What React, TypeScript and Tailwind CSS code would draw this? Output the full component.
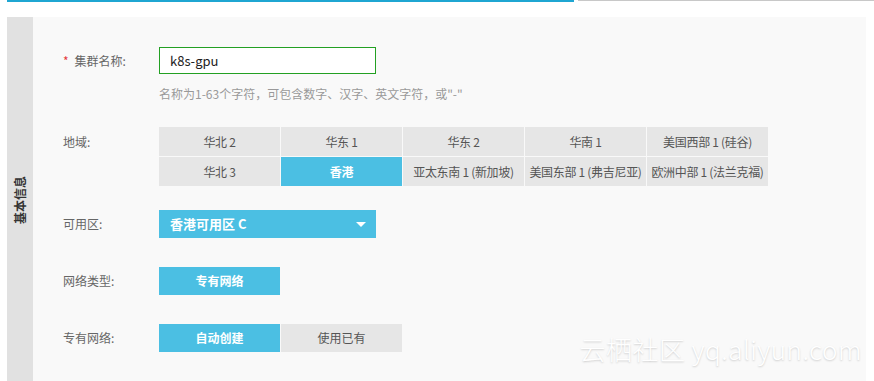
import React from "react";

const regions = [
  ["华北 2", "华东 1", "华东 2", "华南 1", "美国西部 1 (硅谷)"],
  ["华北 3", "香港", "亚太东南 1 (新加坡)", "美国东部 1 (弗吉尼亚)", "欧洲中部 1 (法兰克福)"],
];

const font = { fontFamily: '"Noto Sans CJK SC", "Noto Sans", sans-serif' };

const Label = ({ children, required }: { children: React.ReactNode; required?: boolean }) => (
  <div className="w-[96px] shrink-0 flex items-center text-[12px] text-[#666]">
    {required && <span className="text-[#e4393c] mr-[6px] text-[12px]">*</span>}
    {children}
  </div>
);

const Cell = ({ text, active }: { text: string; active?: boolean }) => (
  <div
    className={`w-[121px] h-[29px] flex items-center justify-center whitespace-nowrap text-[12px] tracking-[-0.3px] ${
      active ? "bg-[#4bbfe3] text-white font-bold" : "bg-[#e6e6e6] text-[#555]"
    }`}
  >
    {text}
  </div>
);

export default function App() {
  return (
    <div className="w-[874px] h-[381px] bg-white overflow-hidden flex flex-col" style={font}>
      <div className="flex h-[2px] shrink-0">
        <div className="w-[7px]" />
        <div className="w-[567px] h-[2px] bg-[#1fa6d2]" />
        <div className="w-[4px]" />
        <div className="flex-1 h-[1px] bg-[#c8c8c8]" />
      </div>
      <div className="h-[15px] shrink-0" />
      <div className="flex flex-1 ml-[7px] w-[859px]">
        <div className="w-[26px] bg-[#e1e1e1] flex items-center justify-center">
          <div className="-rotate-90 whitespace-nowrap text-[12px] font-bold text-[#333] mt-[1px]">
            基本信息
          </div>
        </div>
        <div className="flex-1 bg-[#f9f9f9] pl-[30px] pt-[30px] relative">
          <div className="flex h-[27px]">
            <Label required>集群名称:</Label>
            <div className="w-[217px] h-[27px] bg-[#23a023] p-[1px]">
              <div className="w-full h-full bg-white flex items-center pl-[10px] text-[13px] text-[#222]">
                k8s-gpu
              </div>
            </div>
          </div>
          <div className="ml-[96px] mt-[12px] text-[12px] text-[#999] h-[16px] leading-[16px]">
            名称为1-63个字符，可包含数字、汉字、英文字符，或"-"
          </div>
          <div className="flex mt-[25px]">
            <div className="w-[96px] shrink-0 text-[12px] text-[#666] h-[29px] flex items-center">地域:</div>
            <div className="flex flex-col gap-[1px]">
              {regions.map((row, i) => (
                <div key={i} className="flex gap-[1px]">
                  {row.map((r) => (
                    <Cell key={r} text={r} active={r === "香港"} />
                  ))}
                </div>
              ))}
            </div>
          </div>
          <div className="flex mt-[24px] h-[28px]">
            <Label>可用区:</Label>
            <div className="w-[217px] h-[28px] bg-[#4bbfe3] flex items-center justify-between pl-[11px] pr-[10px] text-white text-[13px] font-bold">
              <span>香港可用区 C</span>
              <svg width="10" height="5" viewBox="0 0 10 5">
                <path d="M0 0 L10 0 L5 5 Z" fill="white" />
              </svg>
            </div>
          </div>
          <div className="flex mt-[29px] h-[28px]">
            <Label>网络类型:</Label>
            <div className="w-[121px] h-[28px] bg-[#4bbfe3] flex items-center justify-center text-white text-[12px] font-bold">
              专有网络
            </div>
          </div>
          <div className="flex mt-[29px] h-[28px]">
            <Label>专有网络:</Label>
            <div className="flex gap-[1px]">
              <div className="w-[121px] h-[28px] bg-[#4bbfe3] flex items-center justify-center text-white text-[12px] font-bold">
                自动创建
              </div>
              <div className="w-[121px] h-[28px] bg-[#e6e6e6] flex items-center justify-center text-[#555] text-[12px]">
                使用已有
              </div>
            </div>
          </div>
          <div
            className="absolute right-[4px] bottom-[13px] text-[26px] font-light text-white whitespace-nowrap tracking-[0.5px]"
            style={{ textShadow: "0 1px 2px rgba(0,0,0,0.18)" }}
          >
            云栖社区 yq.aliyun.com
          </div>
        </div>
      </div>
    </div>
  );
}
